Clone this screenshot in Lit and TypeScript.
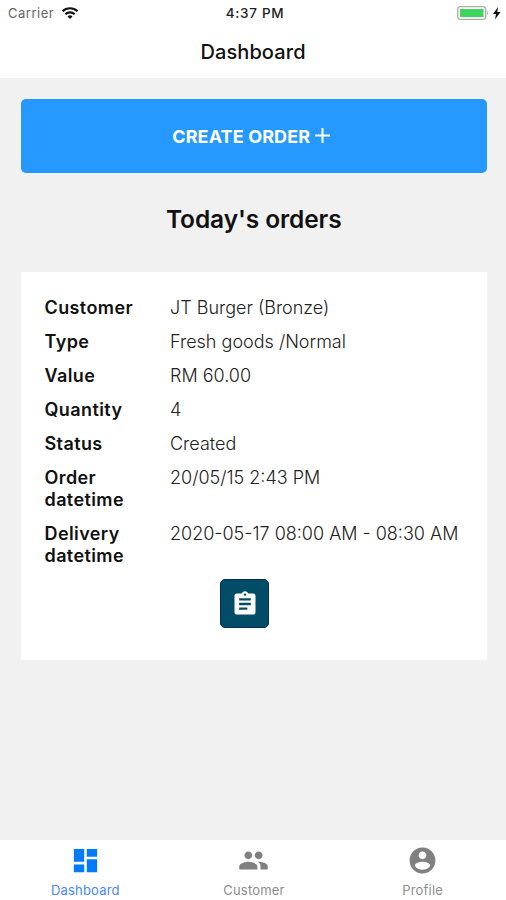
import { LitElement, html, css, svg } from "lit";
import { customElement } from "lit/decorators.js";

const rows: [string, string][] = [
  ["Customer", "JT Burger (Bronze)"],
  ["Type", "Fresh goods /Normal"],
  ["Value", "RM 60.00"],
  ["Quantity", "4"],
  ["Status", "Created"],
  ["Order datetime", "20/05/15 2:43 PM"],
  ["Delivery datetime", "2020-05-17 08:00 AM - 08:30 AM"],
];

const tabs = [
  { label: "Dashboard", active: true, icon: svg`<path d="M3 13h8V3H3v10zm0 8h8v-6H3v6zm10 0h8V11h-8v10zm0-18v6h8V3h-8z"/>` },
  { label: "Customer", active: false, icon: svg`<path d="M16 11c1.66 0 2.99-1.34 2.99-3S17.66 5 16 5s-3 1.34-3 3 1.34 3 3 3zm-8 0c1.66 0 2.99-1.34 2.99-3S9.66 5 8 5 5 6.34 5 8s1.34 3 3 3zm0 2c-2.33 0-7 1.17-7 3.5V19h14v-2.500c0-2.330-4.670-3.500-7-3.500zm7.400.05c1.400.840 2 1.970 2 3.450V19H23v-2.500c0-2.330-4.200-3.500-7.600-3.450z"/>` },
  { label: "Profile", active: false, icon: svg`<path d="M12 2C6.480 2 2 6.480 2 12s4.480 10 10 10 10-4.480 10-10S17.520 2 12 2zm0 3c1.660 0 3 1.340 3 3s-1.340 3-3 3-3-1.340-3-3 1.340-3 3-3zm0 14.200c-2.500 0-4.710-1.280-6-3.220.03-1.990 4-3.080 6-3.080 1.990 0 5.970 1.090 6 3.080-1.290 1.940-3.500 3.220-6 3.220z"/>` },
];

@customElement("app-root")
export class AppRoot extends LitElement {
  static styles = css`
    :host { display: flex; flex-direction: column; height: 900px; box-sizing: border-box; background: #f1f1f1; color: #111; font-family: Inter, "Liberation Sans", sans-serif; overflow: hidden; }
    .top { background: #fff; height: 78px; flex: none; }
    .status { display: grid; grid-template-columns: 1fr auto 1fr; align-items: center; height: 26px; padding: 0 4px 0 8px; font-size: 13px; }
    .carrier { display: flex; align-items: center; gap: 7px; color: #666; letter-spacing: 0.5px; }
    .time { font-size: 13.500px; font-weight: 500; color: #222; letter-spacing: 0.700px; }
    .power { display: flex; justify-content: flex-end; }
    svg { display: block; }
    .title { text-align: center; font-size: 20px; font-weight: 500; line-height: 52px; letter-spacing: 0.1px; }
    main { flex: 1; padding: 21px 19.500px 0 21px; }
    .create { width: 100%; height: 74px; border: 0; border-radius: 5px; background: #2699ff; color: #fff; font: 700 18px Inter, sans-serif; letter-spacing: 0.12px; display: flex; align-items: center; justify-content: center; gap: 5px; padding: 0 5px 0 0; }
    h1 { margin: 0; text-align: center; font-size: 24.500px; font-weight: 600; line-height: 30px; padding: 31px 0 38px; letter-spacing: -0.1px; }
    .card { background: #fff; height: 388px; box-sizing: border-box; padding: 24.500px 23px 0 23.500px; }
    .row { display: grid; grid-template-columns: 125.500px 1fr; line-height: 21.600px; font-size: 18px; margin-bottom: 12.600px; }
    .key { font-weight: 600; width: 100px; letter-spacing: 0.4px; }
    .value { color: #222; font-weight: 300; white-space: nowrap; }
    .detail { display: flex; align-items: center; justify-content: center; width: 49px; height: 49px; margin: 0 0 0 175.500px; border: 1px solid #0a2c55; border-radius: 5px; background: #014c66; padding: 0; box-sizing: border-box; }
    nav { height: 60px; flex: none; background: #fff; display: grid; grid-template-columns: repeat(3, 1fr); padding-left: 1px; margin-right: -1px; }
    .tab { display: flex; flex-direction: column; align-items: center; padding-top: 5px; color: #8e8e8e; fill: #808080; font-size: 13px; line-height: 16px; gap: 6px; letter-spacing: 0.2px; }
    .tab.active { color: #4a86ff; fill: #007aff; }
  `;

  render() {
    return html`
      <header class="top">
        <div class="status">
          <div class="carrier">Carrier
            <svg width="18" height="14" viewBox="0 0 18 14" fill="none" stroke="#111" stroke-width="2.200"><path d="M1.500 5.200a11 11 0 0 1 15 0M4.300 8.300a6.800 6.800 0 0 1 9.400 0"/><path d="M6.500 10.500a3.700 3.700 0 0 1 5 0L9 13z" fill="#111" stroke="none"/></svg>
          </div>
          <div class="time">4:37 PM</div>
          <div class="power">
            <svg width="46" height="16" viewBox="0 0 46 16"><rect x="1.700" y="1.700" width="28" height="12.600" rx="2.500" fill="#fff" stroke="#aaa" stroke-width="1.300"/><rect x="4" y="4" width="23.500" height="8" fill="#3fd45c"/><path d="M31 5.500q2 2.500 0 5z" fill="#aaa"/><path d="M42 2l-5 7h3l-1 5.500 5.500-7.500h-3.200z" fill="#111"/></svg>
          </div>
        </div>
        <div class="title">Dashboard</div>
      </header>
      <main>
        <button class="create"><span>CREATE ORDER</span>
          <svg width="15" height="17" viewBox="0 0 15 17" stroke="#fff" stroke-width="2"><path d="M7.500 0v15M0 7.500h15"/></svg>
        </button>
        <h1>Today's orders</h1>
        <section class="card">
          ${rows.map(([k, v]) => html`<div class="row"><div class="key">${k}</div><div class="value">${v}</div></div>`)}
          <button class="detail" aria-label="Order details">
            <svg width="28" height="28" viewBox="0 0 24 24" fill="#fff"><path d="M19 3h-4.180C14.400 1.840 13.300 1 12 1c-1.300 0-2.400.84-2.820 2H5c-1.100 0-2 .9-2 2v14c0 1.100.9 2 2 2h14c1.100 0 2-.9 2-2V5c0-1.100-.9-2-2-2zm-7 0c.55 0 1 .45 1 1s-.45 1-1 1-1-.45-1-1 .45-1 1-1zm2 14H7v-2h7v2zm3-4H7v-2h10v2zm0-4H7V7h10v2z"/></svg>
          </button>
        </section>
      </main>
      <nav>
        ${tabs.map((t) => html`<div class="tab ${t.active ? "active" : ""}"><svg width="31" height="31" viewBox="0 0 24 24">${t.icon}</svg><span>${t.label}</span></div>`)}
      </nav>
    `;
  }
}
